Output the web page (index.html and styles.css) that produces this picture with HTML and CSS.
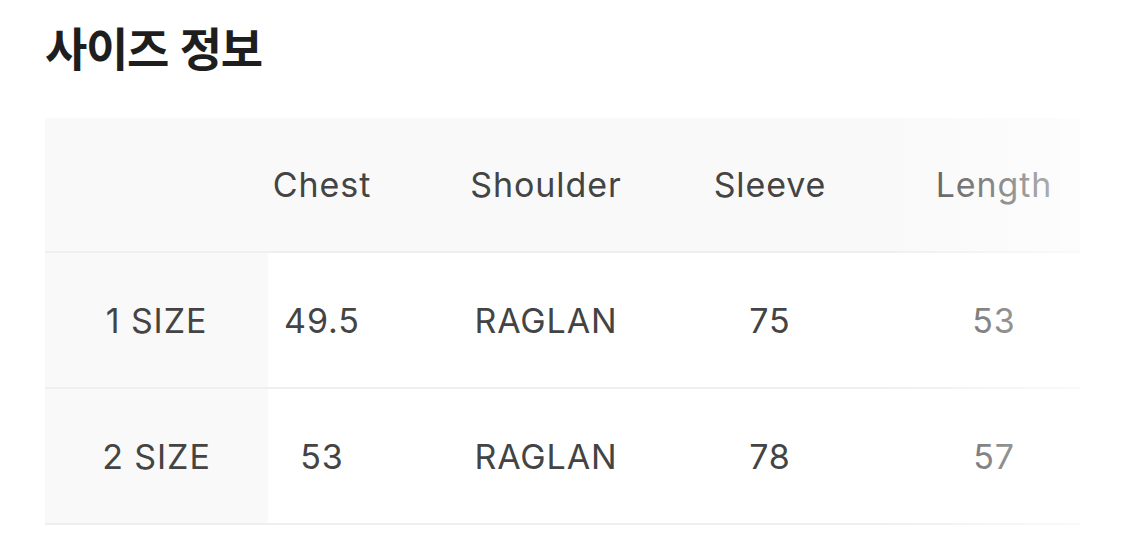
FILE: index.html
```html
<!DOCTYPE html>
<html lang="ko">
<head>
<meta charset="utf-8">
<title>사이즈 정보</title>
<link rel="stylesheet" href="styles.css">
</head>
<body>
<section class="page">
  <h1 class="title">사이즈 정보</h1>
  <div class="table-wrap">
    <div class="table">
      <div class="cell head corner"></div>
      <div class="cell head c-chest">Chest</div>
      <div class="cell head">Shoulder</div>
      <div class="cell head">Sleeve</div>
      <div class="cell head">Length</div>

      <div class="cell label">1 SIZE</div>
      <div class="cell c-chest">49.5</div>
      <div class="cell">RAGLAN</div>
      <div class="cell">75</div>
      <div class="cell">53</div>

      <div class="cell label">2 SIZE</div>
      <div class="cell c-chest">53</div>
      <div class="cell">RAGLAN</div>
      <div class="cell">78</div>
      <div class="cell">57</div>
    </div>
    <div class="fade"></div>
  </div>
</section>
</body>
</html>
```

FILE: styles.css
```css
html, body {
  margin: 0;
  padding: 0;
  background: #fff;
}

.page {
  padding: 18px 45px 0 45px;
  font-family: Inter, "Noto Sans", "Noto Sans CJK KR", sans-serif;
}

.title {
  margin: 0 0 44px 0;
  font-family: "Noto Sans CJK KR", sans-serif;
  font-size: 46px;
  line-height: 56px;
  font-weight: 700;
  color: #1e1e1e;
  letter-spacing: -1.3px;
}

.table-wrap {
  position: relative;
  width: 1035px;
  overflow: hidden;
}

.table {
  display: grid;
  grid-template-columns: 223px 166px 224px 224px 224px;
  width: 1061px;
}

.cell {
  height: 134px;
  border-bottom: 2px solid #efefef;
  display: flex;
  align-items: center;
  justify-content: center;
  font-size: 34px;
  color: #444;
  letter-spacing: 0.9px;
  background: #fff;
}

.cell.head {
  height: 133px;
  background: #f9f9f9;
}

.cell.label {
  background: #f9f9f9;
}

.c-chest {
  padding-right: 58px;
  box-sizing: content-box;
  width: 108px;
}

.fade {
  position: absolute;
  top: 0;
  right: 0;
  bottom: 0;
  width: 200px;
  background: linear-gradient(to right, rgba(255,255,255,0), rgba(255,255,255,0.65));
  pointer-events: none;
}
```
